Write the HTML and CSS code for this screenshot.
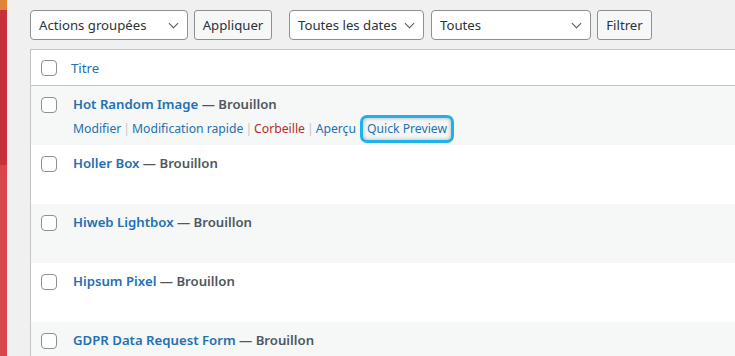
FILE: index.html
```html
<!DOCTYPE html>
<html lang="fr">
<head>
    <meta charset="utf-8">
    <link rel="stylesheet" href="styles.css">
</head>
<body>
    <div class="admin-menu">
        <div class="menu-top"></div>
        <div class="menu-current"></div>
        <div class="menu-rest"></div>
    </div>

    <div class="wrap">
        <div class="tablenav">
            <div class="select select-bulk">Actions groupées<span class="chevron"></span></div>
            <button class="button btn-apply">Appliquer</button>
            <div class="select select-dates">Toutes les dates<span class="chevron"></span></div>
            <div class="select select-cat">Toutes<span class="chevron"></span></div>
            <button class="button btn-filter">Filtrer</button>
        </div>

        <div class="list-table">
            <div class="list-head">
                <span class="check"></span>
                <a class="col-title" href="#">Titre</a>
            </div>

            <div class="list-row alt">
                <span class="check"></span>
                <div class="cell">
                    <div class="row-title"><a href="#">Hot Random Image</a> — Brouillon</div>
                    <div class="row-actions">
                        <a href="#">Modifier</a><span class="sep">|</span><a href="#">Modification rapide</a><span class="sep">|</span><a class="trash" href="#">Corbeille</a><span class="sep">|</span><a href="#">Aperçu</a><a class="focused" href="#">Quick Preview</a>
                    </div>
                </div>
            </div>

            <div class="list-row">
                <span class="check"></span>
                <div class="cell">
                    <div class="row-title"><a href="#">Holler Box</a> — Brouillon</div>
                </div>
            </div>

            <div class="list-row alt">
                <span class="check"></span>
                <div class="cell">
                    <div class="row-title"><a href="#">Hiweb Lightbox</a> — Brouillon</div>
                </div>
            </div>

            <div class="list-row">
                <span class="check"></span>
                <div class="cell">
                    <div class="row-title"><a href="#">Hipsum Pixel</a> — Brouillon</div>
                </div>
            </div>

            <div class="list-row alt">
                <span class="check"></span>
                <div class="cell">
                    <div class="row-title"><a href="#">GDPR Data Request Form</a> — Brouillon</div>
                </div>
            </div>
        </div>
    </div>
</body>
</html>
```

FILE: styles.css
```css
body {
    margin: 0;
    display: flex;
    height: 356px;
    overflow: hidden;
    background: #f0f0f1;
    font-family: "Noto Sans", "Open Sans", sans-serif;
    font-size: 13.2px;
    color: #2c3338;
}

a {
    color: #2271b1;
    text-decoration: none;
}

.admin-menu {
    width: 7px;
    flex: none;
    display: flex;
    flex-direction: column;
}

.menu-top {
    height: 10px;
    background: #e0843c;
}

.menu-current {
    height: 155px;
    background: #c8303a;
}

.menu-rest {
    flex: 1;
    background: #d9464a;
}

.wrap {
    flex: 1;
    padding: 10px 0 0 23px;
    min-width: 0;
}

/* filters bar */
.tablenav {
    display: flex;
    height: 30px;
    gap: 6px;
}

.select {
    position: relative;
    box-sizing: border-box;
    height: 30px;
    line-height: 28px;
    padding: 0 24px 0 8px;
    border: 1px solid #8c8f94;
    border-radius: 4px;
    background: #fff;
    white-space: nowrap;
}

.select-bulk { width: 158px; }
.select-dates { width: 135px; margin-left: 11px; padding-right: 0; }
.select-cat { width: 160px; margin-left: 1px; }

.chevron {
    position: absolute;
    right: 10px;
    top: 9px;
    width: 6px;
    height: 6px;
    border-right: 1.6px solid #50575e;
    border-bottom: 1.6px solid #50575e;
    transform: rotate(45deg);
}

.button {
    box-sizing: border-box;
    height: 30px;
    padding: 0;
    border: 1px solid #8c8f94;
    border-radius: 3px;
    background: #f6f7f7;
    color: #2c3338;
    font: inherit;
}

.btn-apply { width: 78px; }
.btn-filter { width: 55px; }

/* table */
.list-table {
    margin-top: 9px;
    border-top: 1px solid #c3c4c7;
    border-left: 1px solid #c3c4c7;
    background: #fff;
}

.list-head {
    display: flex;
    align-items: center;
    height: 35px;
    padding-left: 10px;
    border-bottom: 1px solid #c3c4c7;
}

.col-title {
    margin-left: 14px;
}

.check {
    box-sizing: border-box;
    flex: none;
    width: 16px;
    height: 16px;
    border: 1px solid #8c8f94;
    border-radius: 4px;
    background: #fff;
}

.list-row {
    display: flex;
    height: 59px;
    padding: 10px 0 0 10px;
    box-sizing: border-box;
}

.list-row .check {
    margin-top: 1px;
}

.list-row.alt {
    background: #f6f7f7;
}

.cell {
    margin-left: 16px;
}

.row-title {
    margin-top: -1px;
    font-weight: 600;
    color: #50575e;
    line-height: 18px;
}

.row-actions {
    margin-top: 5px;
    font-size: 12.2px;
    line-height: 18px;
    white-space: nowrap;
}

.sep {
    color: #c3c4c7;
    margin: 0 2px;
}

.trash {
    color: #b32d2e;
}

.focused {
    display: inline-block;
    margin-left: 7px;
    padding: 2px 4px;
    border-radius: 4px;
    box-shadow: 0 0 0 3px #1eb1ec, inset 0 0 4px rgba(0,0,0,0.3);
}
```
